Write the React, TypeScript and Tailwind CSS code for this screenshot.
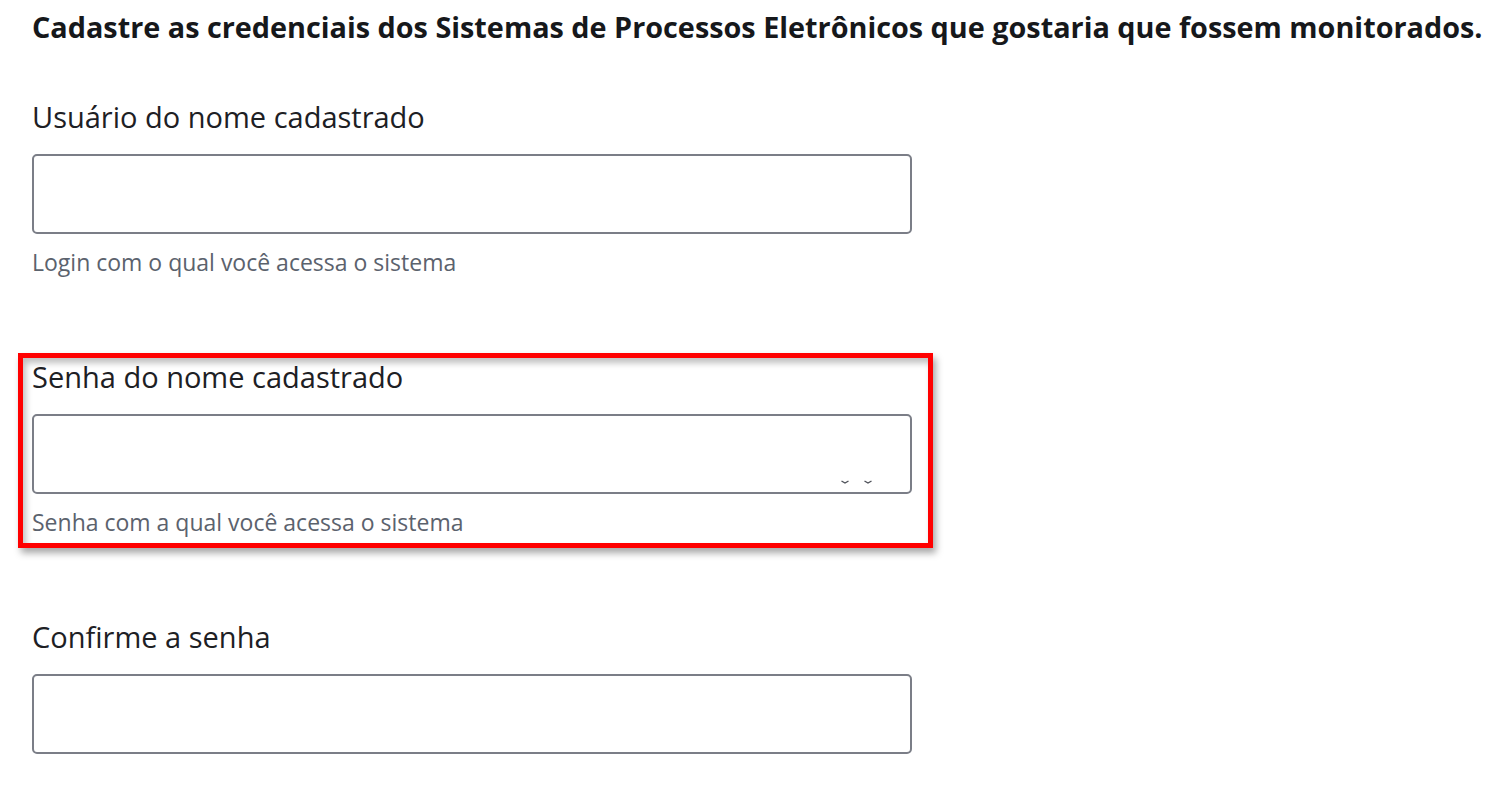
import React from "react";

const Field = ({
  label,
  hint,
  marks,
}: {
  label: string;
  hint?: string;
  marks?: boolean;
}) => {
  return (
    <div className="flex flex-col">
      <label className="text-[29px] leading-[40px] text-[#1d2024]">{label}</label>
      <div className="relative mt-[17px] h-[80px] w-[880px] rounded-[5px] border-2 border-[#7b7e87] bg-white">
        {marks && (
          <>
            <svg className="absolute left-[807px] top-[64px]" width="8" height="5" viewBox="0 0 8 5">
              <path d="M0.5 1 L4 3 L7.5 1" fill="none" stroke="#4f525a" strokeWidth="1.4" />
            </svg>
            <svg className="absolute left-[830px] top-[64px]" width="8" height="5" viewBox="0 0 8 5">
              <path d="M0.5 1 L4 3 L7.5 1" fill="none" stroke="#4f525a" strokeWidth="1.4" />
            </svg>
          </>
        )}
      </div>
      {hint && (
        <p className="mt-[12px] text-[23px] leading-[32px] text-[#5b626d]">{hint}</p>
      )}
    </div>
  );
};

export default function App() {
  return (
    <div
      className="relative min-h-[800px] w-[1496px] bg-white pl-[32px] pt-[7px]"
      style={{ fontFamily: '"Open Sans", "Noto Sans", sans-serif' }}
    >
      <h1 className="whitespace-nowrap text-[28.8px] font-bold leading-[40px] text-[#16181b]">
        Cadastre as credenciais dos Sistemas de Processos Eletrônicos que gostaria que fossem monitorados.
      </h1>

      <div className="mt-[50px] flex flex-col gap-[79px]">
        <Field label="Usuário do nome cadastrado" hint="Login com o qual você acessa o sistema" />
        <Field label="Senha do nome cadastrado" hint="Senha com a qual você acessa o sistema" marks />
        <Field label="Confirme a senha" />
      </div>

      {/* highlight around the password field */}
      <div className="pointer-events-none absolute left-[18px] top-[353px] h-[195px] w-[915px] border-[5px] border-[#ff0000] shadow-[3px_5px_7px_rgba(0,0,0,0.35),inset_3px_5px_6px_rgba(0,0,0,0.25)]" />
    </div>
  );
}
